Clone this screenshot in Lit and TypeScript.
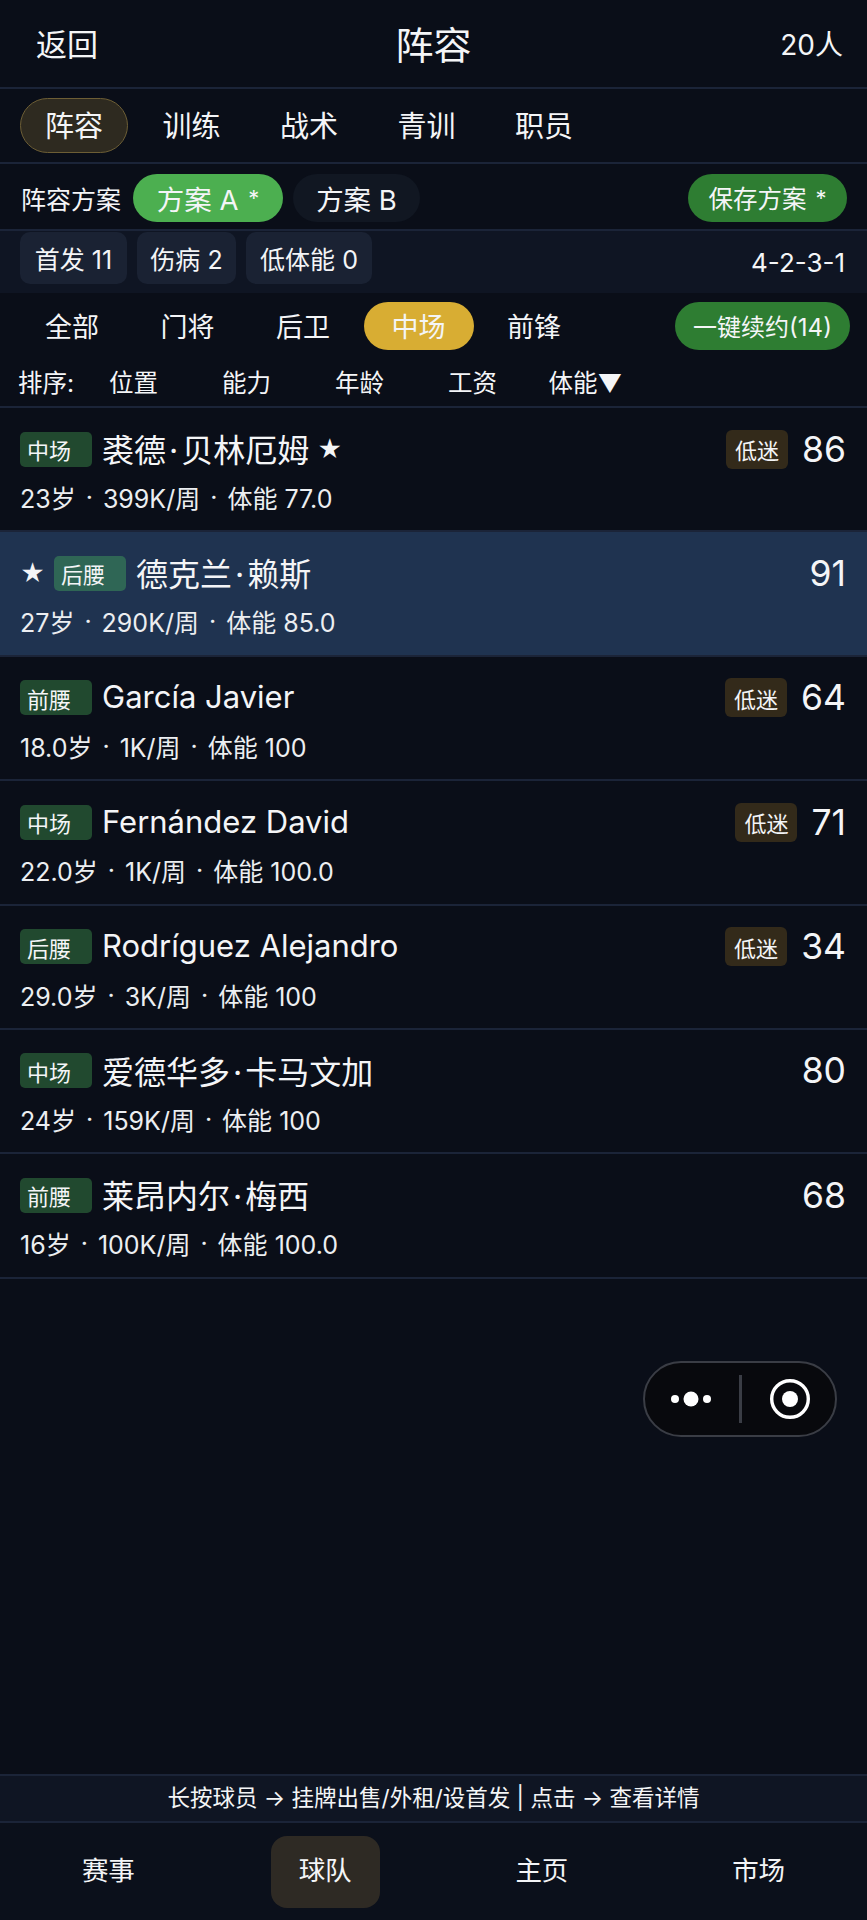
import { LitElement, html, css, nothing } from "lit";
import { customElement } from "lit/decorators.js";

type P = { pos: string; name: string; sub: string[]; rate: number; low?: boolean; star?: "after" | "before" };

const players: P[] = [
  { pos: "中场", name: "裘德·贝林厄姆", sub: ["23岁", "399K/周", "体能 77.0"], rate: 86, low: true, star: "after" },
  { pos: "后腰", name: "德克兰·赖斯", sub: ["27岁", "290K/周", "体能 85.0"], rate: 91, star: "before" },
  { pos: "前腰", name: "García Javier", sub: ["18.0岁", "1K/周", "体能 100"], rate: 64, low: true },
  { pos: "中场", name: "Fernández David", sub: ["22.0岁", "1K/周", "体能 100.0"], rate: 71, low: true },
  { pos: "后腰", name: "Rodríguez Alejandro", sub: ["29.0岁", "3K/周", "体能 100"], rate: 34, low: true },
  { pos: "中场", name: "爱德华多·卡马文加", sub: ["24岁", "159K/周", "体能 100"], rate: 80 },
  { pos: "前腰", name: "莱昂内尔·梅西", sub: ["16岁", "100K/周", "体能 100.0"], rate: 68 },
];

@customElement("app-root")
export class AppRoot extends LitElement {
  static styles = css`
    :host {
      display: block;
      position: relative;
      height: 1920px;
      overflow: hidden;
      background: #0a0e18;
      color: #f4f5f7;
      font-family: Inter, "Noto Sans CJK SC", sans-serif;
      font-weight: 400;
    }
    .page { display: flex; flex-direction: column; height: 100%; }
    .header {
      height: 85px; padding-bottom: 2px; flex: none; display: flex; align-items: center; justify-content: space-between;
      padding-left: 36px; padding-right: 24px; border-bottom: 2px solid #1b2438; position: relative;
    }
    .back { font-size: 31px; }
    .title { font-size: 38px; position: absolute; left: 0; right: 0; text-align: center; }
    .count { font-size: 28px; }
    .tabs {
      height: 73px; flex: none; display: flex; align-items: center; gap: 9.5px; padding-left: 20px;
      border-bottom: 2px solid #1b2438;
    }
    .tab { width: 108px; height: 55px; box-sizing: border-box; padding-bottom: 4px; display: flex; align-items: center; justify-content: center; font-size: 29px; border-radius: 28px; border: 1px solid transparent; }
    .tab.on { background: #2e2a20; border-color: #6d5e35; }
    .plans {
      height: 62px; padding: 3px 20px 0 21px; flex: none; display: flex; align-items: center; border-bottom: 2px solid #1b2438;
    }
    .plan-label { font-size: 25px; width: 112px; }
    .pill { height: 48px; padding-bottom: 1px; border-radius: 24px; display: flex; align-items: center; justify-content: center; font-size: 27.5px; box-sizing: border-box; white-space: pre; }
    .ast { font-size: 22px; margin-left: 2px; }
    .plan-a { width: 150px; background: #4caf50; }
    .plan-b { width: 127px; margin-left: 10px; background: #111722; }
    .save { width: 159px; margin-left: auto; background: #2e7d32; font-size: 24.5px; }
    .stats {
      height: 62px; flex: none; display: flex; gap: 10px; padding: 1px 24px 0 20px; box-sizing: border-box; background: #0f1523;
    }
    .stat { height: 52px; background: #1a2233; border-radius: 10px; display: flex; align-items: center; justify-content: center; font-size: 25px; }
    .stat:nth-child(1) { width: 107px; }
    .stat:nth-child(2) { width: 99px; }
    .stat:nth-child(3) { width: 126px; }
    .form { margin-left: auto; font-size: 26px; align-self: center; margin-right: -2px; padding-bottom: 1px; }
    .filters { height: 60px; padding: 3px 17px 0; flex: none; display: flex; align-items: center; gap: 5.5px; }
    .filter { width: 110px; height: 48px; padding-bottom: 1px; box-sizing: border-box; border-radius: 24px; display: flex; align-items: center; justify-content: center; font-size: 27px; }
    .filter.on { background: #d8ad33; }
    .renew { width: 175px; margin-left: auto; background: #2e7d32; font-size: 24px; white-space: nowrap; }
    .sort { height: 50px; flex: none; display: flex; align-items: center; padding-left: 18px; font-size: 24.5px; border-bottom: 2px solid #1b2438; }
    .sort-label { width: 59px; }
    .sort-item { width: 113px; text-align: center; }
    .list { flex: 1; }
    .row { height: 124.4px; box-sizing: border-box; border-bottom: 2px solid #1b2438; padding: 20px 21px 0 20px; }
    .row.hl { background: #1f3350; }
    .line1 { display: flex; align-items: center; height: 42px; }
    .star { font-size: 24px; }
    .star.b { margin: 0 9px 0 0; }
    .star.a { margin-left: 8px; }
    .tag { width: 72px; height: 35px; flex: none; box-sizing: border-box; padding-left: 7px; border-radius: 5px; background: #21492f; font-size: 22px; display: flex; align-items: center; margin-right: 10px; }
    .row.hl .tag { background: #2f6655; }
    .name { font-size: 31px; position: relative; top: -1px; }
    .name.cjk { font-size: 32px; }
    .name.cjk b { font-weight: inherit; margin: 0 3px; }
    .low { margin-left: auto; width: 62px; height: 39px; border-radius: 6px; background: #332a1a; display: flex; align-items: center; justify-content: center; font-size: 22px; margin-right: 14px; }
    .rate { font-size: 35.5px; margin-left: auto; }
    .low + .rate { margin-left: 0; }
    .sub { font-size: 25px; margin-top: 10px; display: flex; align-items: center; height: 34px; color: #eceef1; }
    .sub i { font-style: normal; margin: 0 10px; }
    .hint { height: 45px; flex: none; display: flex; align-items: center; justify-content: center; font-size: 22.5px; background: #0f1523; border-top: 2px solid #1b2438; border-bottom: 2px solid #1b2438; }
    .hint span { position: relative; top: -3px; }
    .nav { height: 97px; flex: none; display: grid; grid-template-columns: repeat(4, 1fr); align-items: center; justify-items: center; background: #0b101b; }
    .nav-item { width: 109px; height: 72px; box-sizing: border-box; padding-bottom: 6px; display: flex; align-items: center; justify-content: center; font-size: 26.5px; border-radius: 16px; }
    .nav-item.on { background: #2e2a24; }
    .capsule { position: absolute; left: 643px; top: 1361px; width: 194px; height: 76px; box-sizing: border-box; border: 2px solid #3a3d45; border-radius: 38px; background: #08090d; display: block; }
    .capsule svg { display: block; }
  `;

  private renderName(name: string) {
    if (!name.includes("·")) return html`<span class="name">${name}</span>`;
    const [a, b] = name.split("·");
    return html`<span class="name cjk">${a}<b>·</b>${b}</span>`;
  }

  render() {
    return html`
      <div class="page">
        <div class="header"><span class="back">返回</span><span class="title">阵容</span><span class="count">20人</span></div>
        <div class="tabs">
          ${["阵容", "训练", "战术", "青训", "职员"].map((t, i) => html`<div class="tab ${i === 0 ? "on" : ""}">${t}</div>`)}
        </div>
        <div class="plans">
          <span class="plan-label">阵容方案</span>
          <div class="pill plan-a">方案 A <span class="ast">*</span></div>
          <div class="pill plan-b">方案 B</div>
          <div class="pill save">保存方案 <span class="ast">*</span></div>
        </div>
        <div class="stats">
          <div class="stat">首发 11</div><div class="stat">伤病 2</div><div class="stat">低体能 0</div>
          <span class="form">4-2-3-1</span>
        </div>
        <div class="filters">
          ${["全部", "门将", "后卫", "中场", "前锋"].map((t, i) => html`<div class="filter ${i === 3 ? "on" : ""}">${t}</div>`)}
          <div class="pill renew">一键续约(14)</div>
        </div>
        <div class="sort">
          <span class="sort-label">排序:</span>
          ${["位置", "能力", "年龄", "工资", "体能▼"].map((t) => html`<span class="sort-item">${t}</span>`)}
        </div>
        <div class="list">
          ${players.map(
            (p) => html`
              <div class="row ${p.star === "before" ? "hl" : ""}">
                <div class="line1">
                  ${p.star === "before" ? html`<span class="star b">★</span>` : nothing}
                  <span class="tag">${p.pos}</span>
                  ${this.renderName(p.name)}
                  ${p.star === "after" ? html`<span class="star a">★</span>` : nothing}
                  ${p.low ? html`<span class="low">低迷</span>` : nothing}
                  <span class="rate">${p.rate}</span>
                </div>
                <div class="sub">${p.sub[0]}<i>·</i>${p.sub[1]}<i>·</i>${p.sub[2]}</div>
              </div>
            `
          )}
        </div>
        <div class="hint"><span>长按球员 → 挂牌出售/外租/设首发 | 点击 → 查看详情</span></div>
        <div class="nav">
          ${["赛事", "球队", "主页", "市场"].map((t, i) => html`<div class="nav-item ${i === 1 ? "on" : ""}">${t}</div>`)}
        </div>
      </div>
      <div class="capsule">
        <svg width="190" height="72" viewBox="0 0 190 72">
          <circle cx="30" cy="36" r="4" fill="#fff" />
          <circle cx="46" cy="36" r="7.5" fill="#fff" />
          <circle cx="62" cy="36" r="4" fill="#fff" />
          <rect x="94" y="12" width="3" height="48" fill="#3a3d45" />
          <circle cx="145" cy="36" r="18.3" fill="none" stroke="#fff" stroke-width="3.4" />
          <circle cx="145" cy="36" r="8" fill="#fff" />
        </svg>
      </div>
    `;
  }
}
